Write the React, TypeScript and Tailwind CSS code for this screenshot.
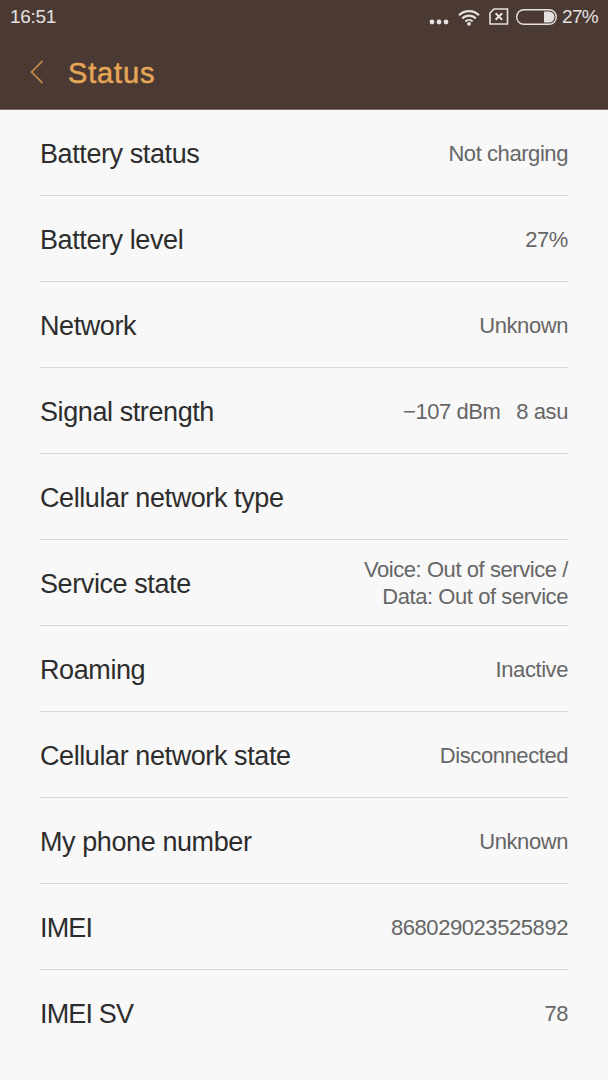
import clsx from "clsx";

type StatusItem = {
  label: string;
  lines: string[];
  tight?: boolean;
};

const items: StatusItem[] = [
  { label: "Battery status", lines: ["Not charging"] },
  { label: "Battery level", lines: ["27%"] },
  { label: "Network", lines: ["Unknown"] },
  { label: "Signal strength", lines: ["−107 dBm\u00a0\u2005\u20058 asu"] },
  { label: "Cellular network type", lines: [] },
  {
    label: "Service state",
    lines: ["Voice: Out of service /", "Data: Out of service"],
  },
  { label: "Roaming", lines: ["Inactive"] },
  { label: "Cellular network state", lines: ["Disconnected"] },
  { label: "My phone number", lines: ["Unknown"] },
  { label: "IMEI", lines: ["868029023525892"], tight: true },
  { label: "IMEI SV", lines: ["78"], tight: true },
];

const DotsIcon = () => (
  <svg className="mt-[9px] h-[6px] w-[20px]" viewBox="0 0 20 6" fill="#e4e1e0">
    <circle cx="3" cy="3" r="2.4" />
    <circle cx="10" cy="3" r="2.4" />
    <circle cx="17" cy="3" r="2.4" />
  </svg>
);

const WifiIcon = () => (
  <svg
    className="mb-px ml-[9px] h-[17px] w-[22px]"
    viewBox="0 0 22 17"
    fill="none"
    stroke="#e4e1e0"
    strokeWidth="2.1"
  >
    <path d="M1 6.2a14.2 14.2 0 0 1 20 0" />
    <path d="M4.2 9.4a9.6 9.6 0 0 1 13.6 0" />
    <path d="M7.4 12.4a5.2 5.2 0 0 1 7.2 0" />
    <circle cx="11" cy="14.8" r="1.9" fill="#e4e1e0" stroke="none" />
  </svg>
);

const NoSimIcon = () => (
  <svg
    className="mb-[2px] ml-[9px] h-[17px] w-[20px]"
    viewBox="0 0 20 17"
    fill="none"
    stroke="#e4e1e0"
    strokeWidth="1.6"
  >
    <path d="M5 1h13.5v15H1V5z" />
    <path d="M6.6 5.2l6.6 6.6M13.2 5.2l-6.6 6.6" strokeWidth="2" />
  </svg>
);

const BatteryIcon = () => (
  <svg className="mb-[2px] ml-[7px] h-[16px] w-[41px]" viewBox="0 0 41 16">
    <rect
      x="0.7"
      y="0.7"
      width="39.6"
      height="14.6"
      rx="7.3"
      fill="none"
      stroke="#e4e1e0"
      strokeWidth="1.4"
    />
    <path d="M28 2.5h5a5.5 5.5 0 0 1 0 11h-5z" fill="#e4e1e0" />
  </svg>
);

const StatusBar = () => (
  <div className="flex h-[35px] items-center justify-between px-[10px] text-[19px] text-[#e4e1e0]">
    <span className="tracking-[-0.3px]">16:51</span>
    <div className="flex items-center">
      <DotsIcon />
      <WifiIcon />
      <NoSimIcon />
      <BatteryIcon />
      <span className="ml-[5px] tracking-[-0.7px]">27%</span>
    </div>
  </div>
);

const Header = () => (
  <header className="h-[110px] border-b border-[#7a6c66] bg-[#4b3a33]">
    <StatusBar />
    <div className="flex h-[74px] items-center pl-[30px] text-[#e5a657]">
      <svg
        className="h-[24px] w-[14px]"
        viewBox="0 0 14 24"
        fill="none"
        stroke="#b9864b"
        strokeWidth="1.8"
      >
        <path d="M12.5 1L1.5 12l11 11" />
      </svg>
      <h1 className="ml-[24px] pt-[3px] text-[29px] tracking-[0.85px] [-webkit-text-stroke:0.5px]">
        Status
      </h1>
    </div>
  </header>
);

const StatusRow = ({ label, lines, tight }: StatusItem) => (
  <li className="flex h-[86px] items-center justify-between border-b border-[#d9d9d9] last:border-b-0">
    <span
      className={clsx(
        "pt-[3px] text-[27px] text-[#2d2d2d]",
        tight ? "tracking-[-0.85px]" : "tracking-[-0.41px]"
      )}
    >
      {label}
    </span>
    <div className="pt-px text-right text-[22px] leading-[27px] tracking-[-0.43px] text-[#666]">
      {lines.map((line) => (
        <div key={line}>{line}</div>
      ))}
    </div>
  </li>
);

export default function App() {
  return (
    <div className="h-screen overflow-hidden bg-[#f8f8f8] font-['Liberation_Sans',Arial,sans-serif]">
      <Header />
      <ul className="px-10">
        {items.map((item) => (
          <StatusRow key={item.label} {...item} />
        ))}
      </ul>
    </div>
  );
}
